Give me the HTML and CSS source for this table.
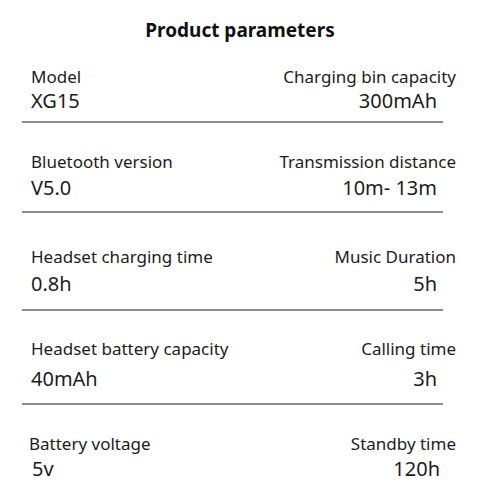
FILE: index.html
```html
<!DOCTYPE html>
<html lang="en">
<head>
<meta charset="utf-8">
<title>Product parameters</title>
<link rel="stylesheet" href="styles.css">
</head>
<body>
<main class="sheet">
  <h1 class="title">Product parameters</h1>

  <section class="row r1">
    <div class="cell left"><div class="label">Model</div><div class="value">XG15</div></div>
    <div class="cell right"><div class="label">Charging bin capacity</div><div class="value">300mAh</div></div>
  </section>
  <div class="rule r1"></div>

  <section class="row r2">
    <div class="cell left"><div class="label">Bluetooth version</div><div class="value">V5.0</div></div>
    <div class="cell right"><div class="label">Transmission distance</div><div class="value">10m- 13m</div></div>
  </section>
  <div class="rule r2"></div>

  <section class="row r3">
    <div class="cell left"><div class="label">Headset charging time</div><div class="value">0.8h</div></div>
    <div class="cell right"><div class="label">Music Duration</div><div class="value">5h</div></div>
  </section>
  <div class="rule r3"></div>

  <section class="row r4">
    <div class="cell left"><div class="label">Headset battery capacity</div><div class="value">40mAh</div></div>
    <div class="cell right"><div class="label">Calling time</div><div class="value">3h</div></div>
  </section>
  <div class="rule r4"></div>

  <section class="row r5">
    <div class="cell left"><div class="label">Battery voltage</div><div class="value">5v</div></div>
    <div class="cell right"><div class="label">Standby time</div><div class="value">120h</div></div>
  </section>
</main>
</body>
</html>
```

FILE: styles.css
```css
html, body {
  margin: 0;
  padding: 0;
  background: #ffffff;
}

body {
  font-family: "Noto Sans", "Open Sans", sans-serif;
  color: #1c1c1c;
  width: 480px;
  height: 500px;
  overflow: hidden;
}

.sheet {
  display: flex;
  flex-direction: column;
  padding: 18px 0 0 0;
}

.title {
  margin: 0;
  font-size: 19px;
  line-height: 24px;
  font-weight: 700;
  text-align: center;
  color: #111;
}

.row {
  display: flex;
  justify-content: space-between;
  padding: 0 24px 0 31px;
  margin-top: 29px;
}

.row.r1 { margin-top: 25px; }
.row.r3 { margin-top: 34px; }
.row.r4 { margin-top: 28px; }

.cell {
  display: flex;
  flex-direction: column;
}

.cell.right {
  align-items: flex-end;
}

.label {
  font-size: 17px;
  line-height: 20px;
}

.value {
  font-size: 20px;
  line-height: 24px;
}

.cell.right .value {
  padding-right: 19px;
}

.r1 .value { margin-top: 2px; }
.r2 .value { margin-top: 4px; }
.r3 .value { margin-top: 5px; }
.r4 .value { margin-top: 8px; }
.r5 .value { margin-top: 3px; }

.r5 .left .label { margin-left: -2px; }
.r5 .left .value { margin-left: 1px; }
.r5 .right .value { padding-right: 16px; }

.rule {
  height: 2px;
  background: #8c8c8c;
  margin: 8px 37px 0 22px;
}

.rule.r2 { margin-top: 11px; }
.rule.r3 { margin-top: 13px; }
.rule.r4 { margin-top: 12px; }
```
